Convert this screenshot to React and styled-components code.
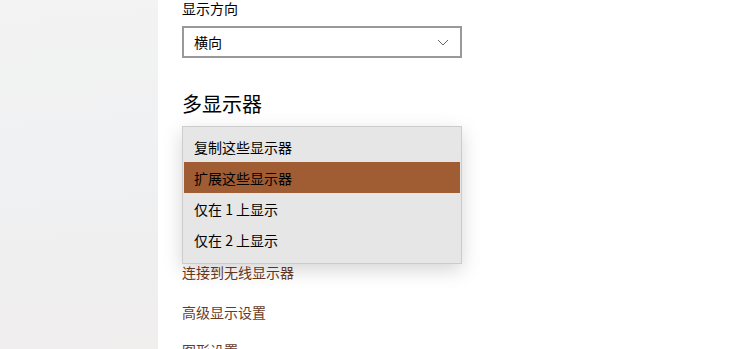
import React from 'react'
import styled, { createGlobalStyle } from 'styled-components'

const GlobalStyle = createGlobalStyle`
  html, body {
    margin: 0;
    padding: 0;
    background: #ffffff;
    font-family: "Noto Sans CJK SC", "Noto Sans", "Liberation Sans", sans-serif;
  }
`

const Page = styled.div`
  display: flex;
  width: 750px;
  height: 349px;
  overflow: hidden;
`

const Sidebar = styled.aside`
  width: 158px;
  flex-shrink: 0;
  background: linear-gradient(175deg, #f3f3f3 0%, #f0f1f2 45%, #efeff0 75%, #f1eeee 100%);
`

const Main = styled.main`
  flex: 1;
  padding: 0 0 0 24px;
`

const Label = styled.div`
  font-size: 14px;
  line-height: 17px;
  color: #000;
`

const Select = styled.div`
  box-sizing: border-box;
  width: 280px;
  height: 32px;
  margin-top: 9px;
  border: 2px solid #999999;
  display: flex;
  align-items: center;
  justify-content: space-between;
  padding: 0 11px 0 10px;
  font-size: 14px;
  color: #000;
`

const Heading = styled.h2`
  margin: 32px 0 0;
  font-size: 20px;
  font-weight: 400;
  line-height: 28px;
  color: #000;
`

/* area taken by the multi-display combo box, which the open menu covers */
const ComboArea = styled.div`
  position: relative;
  height: 144px;
`

const Link = styled.a`
  display: block;
  font-size: 14px;
  line-height: 20px;
  color: #6b3a1d;
  text-decoration: none;
  margin-top: ${p => p.$top || 0}px;
`

const Menu = styled.ul`
  position: absolute;
  left: 0;
  top: 8px;
  z-index: 2;
  box-sizing: border-box;
  width: 280px;
  margin: 0;
  padding: 4px 1px 8px;
  list-style: none;
  background: #e6e6e6;
  border: 1px solid #cccccc;
  box-shadow: 0 6px 18px rgba(0, 0, 0, 0.17);
`

const Item = styled.li`
  height: 31px;
  display: flex;
  align-items: center;
  padding-left: 10px;
  font-size: 14px;
  color: #000;
  background: ${p => (p.$active ? '#a05c33' : 'transparent')};
`

const Chevron = () => (
  <svg width="12" height="7" viewBox="0 0 12 7">
    <path d="M1 1 L6 6 L11 1" fill="none" stroke="#666" strokeWidth="1" />
  </svg>
)

const options = ['复制这些显示器', '扩展这些显示器', '仅在 1 上显示', '仅在 2 上显示']

export default function App() {
  return (
    <>
      <GlobalStyle />
      <Page>
        <Sidebar />
        <Main>
          <Label>显示方向</Label>
          <Select>
            <span>横向</span>
            <Chevron />
          </Select>
          <Heading>多显示器</Heading>
          <ComboArea>
            <Menu>
              {options.map((o, i) => (
                <Item key={o} $active={i === 1}>{o}</Item>
              ))}
            </Menu>
          </ComboArea>
          <Link>连接到无线显示器</Link>
          <Link $top={20}>高级显示设置</Link>
          <Link $top={18}>图形设置</Link>
        </Main>
      </Page>
    </>
  )
}
